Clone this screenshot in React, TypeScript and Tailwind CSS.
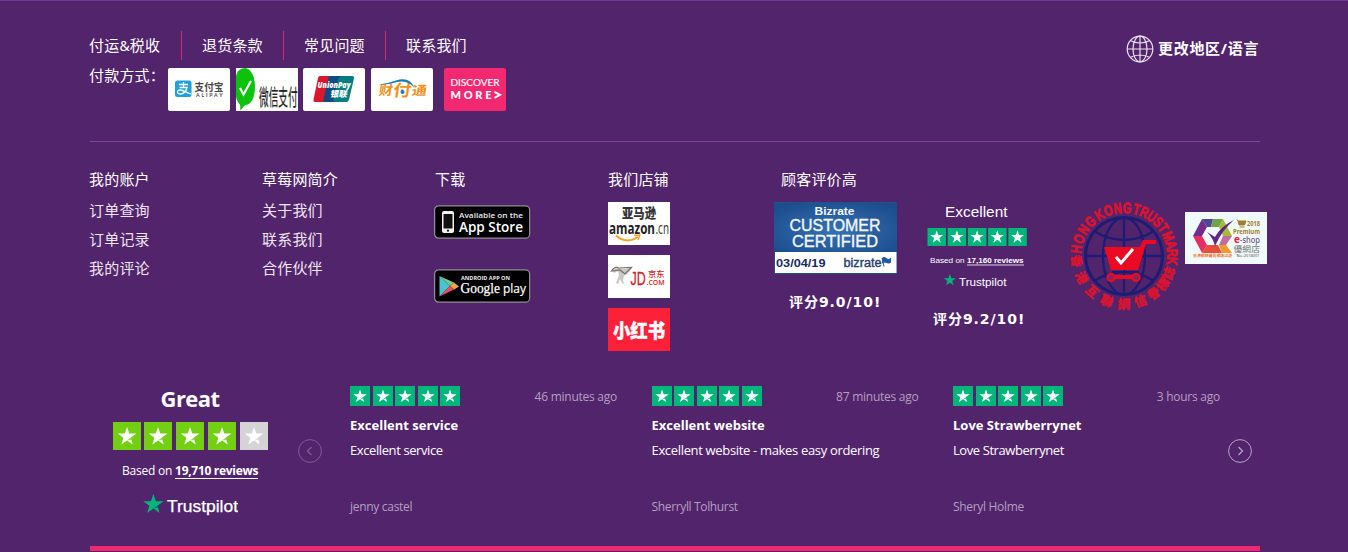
import React from "react";

const STAR = "M12 1.5l2.6 7.6h8.1l-6.5 4.8 2.4 7.7L12 16.9l-6.6 4.7 2.4-7.7L1.3 9.1h8.1z";

function StarBox({ size, fill }: { size: number; fill: string }) {
  return (
    <svg width={size} height={size} viewBox="0 0 28 28" className="block shrink-0">
      <rect width="28" height="28" fill={fill} />
      <g transform="translate(3.6 3.7) scale(.87)">
        <path d={STAR} fill="#fff" />
        <path d="M12 16.9l4.2-3 .8 2.4z" fill={fill} opacity=".75" />
      </g>
    </svg>
  );
}

const cjk = "'Noto Sans CJK SC', sans-serif";

function Alipay() {
  return (
    <svg width="62" height="43" viewBox="0 0 62 43" className="rounded-[2px] bg-white font-normal tracking-normal">
      <rect x="7" y="12.500" width="16.500" height="16.500" rx="2.500" fill="#20a1dc" />
      <path d="M11 16.5h9M15.500 14v5.500M11.500 19.500h7.500c-1 4-4 6.500-7 6.500-3.500 0-3-4 0-4 3.500 0 6 2.500 11 4" fill="none" stroke="#fff" strokeWidth="1.300" />
      <text x="26.500" y="22.500" textLength="29" lengthAdjust="spacingAndGlyphs" fontSize="10" fontWeight="700" fontFamily={cjk} fill="#4b4748">支付宝</text>
      <text x="28" y="29" textLength="26.500" fontSize="5.200" fontWeight="700" fontFamily="Lato, sans-serif" fill="#4b4748">ALIPAY</text>
    </svg>
  );
}

function WeChat() {
  return (
    <svg width="62" height="43" viewBox="0 0 62 43" className="bg-white font-normal tracking-normal">
      <path d="M8.500 0C14 0 19 7 19 18.500S15 37 9 37c-1.500 1.500-3 4-5 5.500.4-2.500.3-4 0-6C-3 31-3 5 4 1.500 5.500.5 7 0 8.500 0z" fill="#0cc20c" />
      <path d="M4 20l3.500 6.500L15 13" fill="none" stroke="#fff" strokeWidth="2.200" />
      <g transform="translate(23 36.5) scale(.46 1.04)">
        <text x="0" y="0" fontSize="21" fontFamily={cjk} fill="#222" stroke="#222" strokeWidth=".2">微信支付</text>
      </g>
    </svg>
  );
}

function UnionPay() {
  return (
    <svg width="62" height="43" viewBox="0 0 62 43" className="rounded-[2px] bg-white font-normal tracking-normal">
      <path d="M17 8h16l-6 26H12.500q-2.500 0-2-2.500L15 10q.5-2 2-2z" fill="#d9182c" />
      <path d="M27 8h12l-6 26H20.500q-.5 0 .1-2.500L25 10.500Q25.500 8 27 8z" fill="#0e4b80" />
      <path d="M40 8h9q2.600 0 2 2.500L46 31.500Q45.500 34 43 34H32.500q-2.500 0-2-2.500L35.500 10.500Q36 8 40 8z" fill="#067d80" />
      <text x="14.500" y="20" textLength="33" lengthAdjust="spacingAndGlyphs" fontSize="8" fontWeight="800" fontStyle="italic" fontFamily="Open Sans, sans-serif" fill="#fff">UnionPay</text>
      <text x="27" y="29" textLength="17" lengthAdjust="spacingAndGlyphs" fontSize="8.500" fontWeight="900" fontFamily={cjk} fill="#fff" transform="skewX(-10) translate(5 0)">银联</text>
    </svg>
  );
}

function Tenpay() {
  return (
    <svg width="62" height="43" viewBox="0 0 62 43" className="rounded-[2px] bg-white font-normal tracking-normal">
      <g fill="#ee921c" fontWeight="700" fontFamily={cjk} transform="translate(4.500 0) skewX(-9)">
        <text x="7" y="27.500" textLength="14" lengthAdjust="spacingAndGlyphs" fontSize="13.500">财</text>
        <text x="21.500" y="28" textLength="18" lengthAdjust="spacingAndGlyphs" fontSize="16">付</text>
        <text x="40" y="27.500" textLength="15" lengthAdjust="spacingAndGlyphs" fontSize="12.500">通</text>
      </g>
      <path d="M8 16.500Q17 15.500 25 12.500 39 8 43.500 20 37 11.500 26 14 17 17 8 16.500z" fill="#167dbe" />
      <circle cx="31.500" cy="24" r="2" fill="#167dbe" />
    </svg>
  );
}

function Discover() {
  return (
    <svg width="62" height="43" viewBox="0 0 62 43" className="rounded-[2px] bg-[#f22871] font-normal tracking-normal">
      <text x="6.500" y="18" textLength="49" lengthAdjust="spacingAndGlyphs" fontSize="8.800" fontFamily="Lato, sans-serif" fill="#fff" stroke="#fff" strokeWidth=".15">DISCOVER</text>
      <text x="6.500" y="31" textLength="41" fontSize="11" fontWeight="900" fontFamily="Lato, sans-serif" fill="#fff">MORE</text>
      <path d="M50.500 23.800l5.500 3-5.500 3" fill="none" stroke="#fff" strokeWidth="1.900" />
    </svg>
  );
}

function Globe() {
  return (
    <svg width="28" height="28" viewBox="0 0 28 28" fill="none" stroke="#e9e2ee" strokeWidth="1.200">
      <circle cx="14" cy="14" r="12.800" />
      <ellipse cx="14" cy="14" rx="7" ry="12.800" />
      <path d="M14 1v26M1 14h26M4 5.500q10 5 20 0M4 22.500q10-5 20 0" />
    </svg>
  );
}

function AppStore() {
  return (
    <svg width="97" height="34" viewBox="0 0 97 34" className="font-normal tracking-normal">
      <rect x=".6" y=".8" width="95" height="32.400" rx="4" fill="#000" stroke="#929096" strokeWidth="1.200" />
      <rect x="8" y="6" width="12" height="22" rx="2" fill="#f2f2f2" />
      <rect x="9.500" y="9" width="9" height="14.500" fill="#111" />
      <circle cx="14" cy="25.700" r="1.100" fill="#111" />
      <text x="25" y="12.500" textLength="64" lengthAdjust="spacingAndGlyphs" fontSize="7.800" fontWeight="600" fontFamily="Open Sans, sans-serif" fill="#eee">Available on the</text>
      <text x="25" y="26.500" textLength="64" lengthAdjust="spacingAndGlyphs" fontSize="15" fontWeight="600" fontFamily="Open Sans, sans-serif" fill="#fff">App Store</text>
    </svg>
  );
}

function GooglePlay() {
  return (
    <svg width="97" height="34" viewBox="0 0 97 34" className="font-normal tracking-normal">
      <rect x=".6" y=".8" width="95" height="32.400" rx="4" fill="#000" stroke="#929096" strokeWidth="1.200" />
      <path d="M5.500 7v20.500L16 17z" fill="#49c3cf" />
      <path d="M5.500 7L16 17l4-3.500z" fill="#70ca8e" />
      <path d="M16 17l4-3.500 5 4-5 3z" fill="#f1a44b" />
      <path d="M5.500 27.500L16 17l4 3.500z" fill="#e64f62" />
      <text x="27" y="11" textLength="49" lengthAdjust="spacingAndGlyphs" fontSize="6" fontWeight="700" fontFamily="Open Sans, sans-serif" fill="#eee">ANDROID APP ON</text>
      <text x="26.500" y="24" textLength="39.500" lengthAdjust="spacingAndGlyphs" fontSize="15" fontFamily="Liberation Serif, serif" fill="#fff" stroke="#fff" strokeWidth=".25">Google</text>
      <text x="69" y="24" textLength="23" lengthAdjust="spacingAndGlyphs" fontSize="13.500" fontFamily="Open Sans, sans-serif" fill="#fff" stroke="#fff" strokeWidth=".2">play</text>
    </svg>
  );
}

function Amazon() {
  return (
    <svg width="62" height="43" viewBox="0 0 62 43" className="bg-white font-normal tracking-normal">
      <text x="14" y="16" textLength="34" lengthAdjust="spacingAndGlyphs" fontSize="13.500" fontWeight="900" fontFamily={cjk} fill="#333">亚马逊</text>
      <text x="1" y="31.500" textLength="46" lengthAdjust="spacingAndGlyphs" fontSize="16.500" fontWeight="700" fontFamily="Open Sans, sans-serif" fill="#222">amazon</text>
      <text x="47.500" y="31.500" textLength="13.500" lengthAdjust="spacingAndGlyphs" fontSize="16.500" fontFamily="Open Sans, sans-serif" fill="#333">.cn</text>
      <path d="M8 33.500q10 9 22 1.500" fill="none" stroke="#f6a02c" strokeWidth="2" />
      <path d="M26 33.500l6-.5-2 5" fill="none" stroke="#f6a02c" strokeWidth="1.300" />
    </svg>
  );
}

function JD() {
  return (
    <svg width="62" height="43" viewBox="0 0 62 43" className="bg-white font-normal tracking-normal">
      <path d="M4 15l6-2 5 1 9-1-3 4-5 4-1 4 1 4-2-1-2-4-2 5-2-1 3-8-1-4-4 2z" fill="#c9c6c5" />
      <path d="M3.500 16q3-5 7.500-3l12.500-.5-6.500 6.500-5-4z" fill="none" stroke="#77716f" strokeWidth="1.200" />
      <g transform="translate(22.500 30) scale(.92 1)">
        <text x="0" y="0" textLength="16.500" lengthAdjust="spacingAndGlyphs" fontSize="19" fontFamily="Liberation Sans, sans-serif" fill="#d02128" stroke="#d02128" strokeWidth=".3">JD</text>
      </g>
      <text x="40" y="22" textLength="16.500" lengthAdjust="spacingAndGlyphs" fontSize="8" fontWeight="500" fontFamily={cjk} fill="#d02128">京东</text>
      <text x="38.500" y="30" textLength="18" lengthAdjust="spacingAndGlyphs" fontSize="7.500" fontWeight="600" fontFamily="Open Sans, sans-serif" fill="#d02128">.COM</text>
    </svg>
  );
}

function RedBook() {
  return (
    <svg width="62" height="43" viewBox="0 0 62 43" className="bg-[#fc2039] font-normal tracking-normal">
      <text x="5" y="29.500" textLength="52" lengthAdjust="spacingAndGlyphs" fontSize="19.500" fontWeight="900" fontFamily={cjk} fill="#fff" stroke="#fff" strokeWidth=".4">小红书</text>
    </svg>
  );
}

function Bizrate() {
  return (
    <svg width="123" height="72" viewBox="0 0 123 72" className="font-normal tracking-normal">
      <defs>
        <radialGradient id="biz" cx=".5" cy=".55" r=".65">
          <stop offset="0" stopColor="#3573b4" />
          <stop offset="1" stopColor="#1c4c8c" />
        </radialGradient>
      </defs>
      <rect width="123" height="72" fill="#23508e" />
      <rect y="1" width="123" height="50" fill="url(#biz)" />
      <rect x="1" y="50" width="121.500" height="21" fill="#fff" />
      <g fontFamily="Liberation Sans, sans-serif" fill="#f4f6fa">
        <text x="40.500" y="13" textLength="40" lengthAdjust="spacingAndGlyphs" fontSize="10.500" fontWeight="700">Bizrate</text>
        <text x="15.500" y="28.500" textLength="91" lengthAdjust="spacingAndGlyphs" fontSize="16.500" stroke="#f4f6fa" strokeWidth=".35">CUSTOMER</text>
        <text x="18" y="44.500" textLength="86" lengthAdjust="spacingAndGlyphs" fontSize="16.500" stroke="#f4f6fa" strokeWidth=".35">CERTIFIED</text>
      </g>
      <text x="2" y="64.500" textLength="49.500" lengthAdjust="spacingAndGlyphs" fontSize="10.500" fontWeight="700" fontFamily="Liberation Sans, sans-serif" fill="#172b5d">03/04/19</text>
      <text x="69.500" y="65" textLength="38" lengthAdjust="spacingAndGlyphs" fontSize="12" fontFamily="Liberation Sans, sans-serif" fill="#26416e" stroke="#26416e" strokeWidth=".4">bizrate</text>
      <path d="M108 56l2 8.500" stroke="#2b5895" strokeWidth="1" />
      <path d="M108 56q2-2 4.500 0t4.500-.5v5q-2 1.500-4.500.5t-4.500.5z" fill="#225aa4" />
    </svg>
  );
}

function TrustpilotRating() {
  return (
    <svg width="101" height="94" viewBox="0 0 101 94" className="font-normal tracking-normal">
      <g fontFamily="Liberation Sans, sans-serif" fill="#fff">
        <text x="18" y="14.500" textLength="62.500" fontSize="15.500" lengthAdjust="spacingAndGlyphs">Excellent</text>
        <text x="3" y="61" textLength="34.500" lengthAdjust="spacingAndGlyphs" fontSize="7.500">Based on</text>
        <text x="40" y="61" textLength="56.500" lengthAdjust="spacingAndGlyphs" fontSize="7.500" fontWeight="700">17,160 reviews</text>
        <text x="32" y="84" textLength="47.500" lengthAdjust="spacingAndGlyphs" fontSize="11.500">Trustpilot</text>
      </g>
      <path d="M40 63h57" stroke="#fff" strokeWidth=".8" />
      {[0, 1, 2, 3, 4].map((i) => (
        <g key={i} transform={`translate(${0.5 + i * 20.2} 26)`}>
          <rect width="18.500" height="18" fill="#00b67a" />
          <path d={STAR} fill="#fff" transform="translate(1.900 1.500) scale(.61)" />
        </g>
      ))}
      <path d={STAR} fill="#00b67a" transform="translate(16 71) scale(.57)" />
    </svg>
  );
}

const markLetters: [string, number][] = [
  ["H", -81], ["O", -68], ["N", -55], ["G", -42],
  ["K", -28], ["O", -16], ["N", -4], ["G", 8],
  ["T", 20], ["R", 30], ["U", 41], ["S", 51], ["T", 61],
  ["M", 73], ["A", 84], ["R", 94], ["K", 104],
];
const markBottom: [string, number][] = [
  ["香", 264], ["港", 243], ["互", 222], ["聯", 201], ["網", 180], ["信", 160], ["譽", 142], ["標", 126], ["誌", 111],
];

function TrustMark() {
  return (
    <svg width="110" height="112" viewBox="0 0 110 112" className="font-normal tracking-normal">
      <g fill="none" stroke="#1d1c75" strokeWidth="2.300">
        <circle cx="55" cy="55" r="38.500" strokeWidth="3" />
        <ellipse cx="55" cy="55" rx="21" ry="38.500" />
        <path d="M55 16v78M16 55h78M25 30q30 18 60 0M25 80q30-18 60 0" />
      </g>
      <g fill="#d9152f" fontFamily="Liberation Sans, sans-serif" fontWeight="700" fontSize="15" textAnchor="middle">
        {markLetters.map(([c, a], i) => (
          <text key={i} transform={`translate(55 55) rotate(${a * 0.96 - 4}) translate(0 -43) scale(.74 1)`} stroke="#d9152f" strokeWidth=".9">{c}</text>
        ))}
      </g>
      <g fill="#d9152f" fontFamily={cjk} fontWeight="900" fontSize="12.500" textAnchor="middle" stroke="#d9152f" strokeWidth=".3">
        {markBottom.map(([c, a]) => (
          <text key={a} transform={`translate(55 55) rotate(${a}) translate(0 -48) rotate(180) translate(0 4.500)`}>{c}</text>
        ))}
      </g>
      <path d="M35 46h36l3-7h13v4H77l-8 26H42z" fill="#ec0a22" />
      <path d="M42 69l-1 5h30v4H42" fill="#ec0a22" />
      <path d="M43 71h27" stroke="#1d1c75" strokeWidth="2" />
      <circle cx="42" cy="76.500" r="3.500" fill="#61336f" stroke="#ec0a22" strokeWidth="2.500" />
      <circle cx="67" cy="76.500" r="3.500" fill="#61336f" stroke="#ec0a22" strokeWidth="2.500" />
      <path d="M47 56l5 6 12-14" fill="none" stroke="#fff" strokeWidth="3" />
    </svg>
  );
}

function PremiumShop() {
  return (
    <svg width="82" height="52" viewBox="0 0 82 52" className="bg-[#f1fafb] font-normal tracking-normal">
      <path d="M17 7l5 8-5 9H8z" fill="#722d8c" />
      <path d="M8 24h9l5 9-5 8z" fill="#e42f64" />
      <path d="M17 41l5-8h11l4 8z" fill="#e5503a" />
      <path d="M17 7h11l-2 8h-4z" fill="#4e4894" />
      <path d="M28 7h10l-4 8h-8z" fill="#6fa446" />
      <path d="M38 7l9 17h-9l-4-9z" fill="#a8ba34" />
      <path d="M38 24h9l-6 9h-7z" fill="#c46aa0" />
      <path d="M34 33h7l6 8H37z" fill="#f19a2c" />
      <path d="M22 20l8 5q6-11 19-17Q37 18 30 34 28 26 22 20z" fill="#612589" />
      <text x="8" y="45" textLength="39" lengthAdjust="spacingAndGlyphs" fontSize="3.500" fontWeight="700" fontFamily={cjk} fill="#ed712c">香港網絡優質網店認證</text>
      <path d="M53 9h8l-1.500 4H54zM53 9l-1-1.500M54.500 15h5" fill="#a17c2b" stroke="#a17c2b" />
      <g fontFamily="Open Sans, sans-serif" fontWeight="700">
        <text x="62" y="14" textLength="13" lengthAdjust="spacingAndGlyphs" fontSize="7" fill="#a17c2b">2018</text>
        <text x="48" y="22" textLength="27" lengthAdjust="spacingAndGlyphs" fontSize="7" fill="#a17c2b">Premium</text>
        <text x="49" y="30.500" fontSize="10" fill="#dc2143">e</text>
        <text x="55" y="30.500" textLength="20" lengthAdjust="spacingAndGlyphs" fontSize="8.500" fill="#72608c" fontWeight="600">-shop</text>
      </g>
      <text x="48.500" y="40" textLength="26.500" lengthAdjust="spacingAndGlyphs" fontSize="8.500" fontFamily={cjk} fill="#777">優網店</text>
      <text x="51.500" y="45" textLength="23" lengthAdjust="spacingAndGlyphs" fontSize="3.500" fontFamily="Open Sans, sans-serif" fill="#444">No.:2018001</text>
    </svg>
  );
}

function LinkColumn({ title, links }: { title: string; links: string[] }) {
  return (
    <section className="w-[173px] shrink-0">
      <h3 className="h-[17px] leading-[17px]">{title}</h3>
      <ul className="mt-[8px] text-[#eee5f2]">
        {links.map((l) => (
          <li key={l} className="h-[29px] leading-[29px]">{l}</li>
        ))}
      </ul>
    </section>
  );
}

type Review = { title: string; body: string; bodyTrack: string; by: string; byTrack: string; when: string };
const reviews: Review[] = [
  { title: "Excellent service", body: "Excellent service", bodyTrack: "tracking-[-0.4px]", by: "jenny castel", byTrack: "tracking-[-0.3px]", when: "46 minutes ago" },
  { title: "Excellent website", body: "Excellent website - makes easy ordering", bodyTrack: "tracking-[-0.33px]", by: "Sherryll Tolhurst", byTrack: "tracking-[-0.35px]", when: "87 minutes ago" },
  { title: "Love Strawberrynet", body: "Love Strawberrynet", bodyTrack: "tracking-[-0.42px]", by: "Sheryl Holme", byTrack: "tracking-[-0.32px]", when: "3 hours ago" },
];

function Arrow({ next }: { next?: boolean }) {
  return (
    <svg width="24" height="24" viewBox="0 0 24 24" fill="none" stroke={next ? "#b8a3c4" : "#7f5d93"} strokeWidth="1" className="block shrink-0">
      <circle cx="12" cy="12" r="11.400" />
      <path d={next ? "M10.500 8l4 4-4 4" : "M13.500 8l-4 4 4 4"} strokeWidth="1.300" />
    </svg>
  );
}

function ReviewCard({ r }: { r: Review }) {
  return (
    <article className="w-[267px] shrink-0 font-['Open_Sans',sans-serif] text-[13px]">
      <div className="flex h-5 items-center justify-between">
        <div className="flex gap-[2.5px]">
          {[0, 1, 2, 3, 4].map((i) => <StarBox key={i} size={20} fill="#00b67a" />)}
        </div>
        <span className="mt-[2px] text-[12px] font-medium leading-5 tracking-[-0.25px] text-[#b39fc0]">{r.when}</span>
      </div>
      <h4 className="mt-[10px] h-[18px] whitespace-nowrap font-bold leading-[18px]">{r.title}</h4>
      <p className={`mt-[7px] h-[18px] whitespace-nowrap font-medium leading-[18px] text-white ${r.bodyTrack}`}>{r.body}</p>
      <p className={`mt-[39px] h-[18px] text-[12px] font-medium leading-[18px] text-[#b39fc0] ${r.byTrack}`}>{r.by}</p>
    </article>
  );
}

export default function App() {
  return (
    <footer className="h-[552px] w-[1348px] overflow-hidden border-t border-[#74378a] bg-[#52246b] font-['Noto_Sans','Noto_Sans_CJK_SC',sans-serif] text-[15px] tracking-[0.2px] text-white">
      <div className="ml-[89px] w-[1171px]">
        <div className="flex h-[140px] justify-between pt-[30px]">
          <div>
            <nav className="flex h-[29px] items-center whitespace-nowrap leading-[29px]">
              <a className="w-[93px] border-r border-[#d52b74]">付运<span className="text-[14px]">&amp;</span>税收</a>
              <a className="w-[102px] border-r border-[#d52b74] pl-[20px]">退货条款</a>
              <a className="w-[102px] border-r border-[#d52b74] pl-[20px]">常见问题</a>
              <a className="w-[102px] pl-[20px]">联系我们</a>
            </nav>
            <div className="mt-[8px] flex">
              <span className="-mt-px h-[17px] w-[79px] whitespace-nowrap leading-[17px]">付款方式：</span>
              <Alipay />
              <div className="ml-[6px]"><WeChat /></div>
              <div className="ml-[5px]"><UnionPay /></div>
              <div className="ml-[6px]"><Tenpay /></div>
              <div className="ml-[11px]"><Discover /></div>
            </div>
          </div>
          <div className="mt-[4px] flex h-7 items-center gap-[3px] font-bold">
            <Globe />
            <span className="-mt-[2px] w-[103px] whitespace-nowrap pl-px leading-7 tracking-[0.7px]">更改地区/语言</span>
          </div>
        </div>
        <hr className="ml-px border-0 border-t border-[#7e4392]" />

        <div className="flex h-[244px] w-[1179px] pt-[29px]">
          <LinkColumn title="我的账户" links={["订单查询", "订单记录", "我的评论"]} />
          <LinkColumn title="草莓网简介" links={["关于我们", "联系我们", "合作伙伴"]} />
          <section className="w-[173px] shrink-0">
            <h3 className="h-[17px] leading-[17px]">下载</h3>
            <div className="-ml-px mt-[17px] flex flex-col gap-[30px]">
              <AppStore />
              <GooglePlay />
            </div>
          </section>
          <section className="w-[166px] shrink-0">
            <h3 className="h-[17px] leading-[17px]">我们店铺</h3>
            <div className="mt-[14px] flex flex-col gap-[10px]">
              <Amazon />
              <JD />
              <RedBook />
            </div>
          </section>
          <section className="shrink-0">
            <h3 className="ml-[7px] h-[17px] leading-[17px]">顾客评价高</h3>
            <div className="mt-[14px] flex items-start font-['DejaVu_Sans','Noto_Sans_CJK_SC',sans-serif] text-[14px] font-bold">
              <div className="flex w-[153px] flex-col">
                <Bizrate />
                <p className="ml-[15px] mt-[18px] h-5 whitespace-nowrap leading-5 tracking-[0.95px]">评分9.0/10!</p>
              </div>
              <div className="w-[142px]">
                <TrustpilotRating />
                <p className="ml-[6px] mt-[13px] h-5 whitespace-nowrap leading-5 tracking-[0.95px]">评分9.2/10!</p>
              </div>
              <div className="-mt-px w-[116px]"><TrustMark /></div>
              <div className="mt-[10px]"><PremiumShop /></div>
            </div>
          </section>
        </div>

        <div className="ml-px flex h-[160px] font-['Open_Sans',sans-serif] tracking-normal">
          <div className="flex w-[200px] shrink-0 flex-col items-center">
            <h2 className="-mt-[2px] h-[28px] text-[22px] font-bold leading-[28px] tracking-[-0.6px]">Great</h2>
            <div className="mt-[10px] flex w-[155px] justify-between">
              {[0, 1, 2, 3, 4].map((i) => <StarBox key={i} size={28} fill={i < 4 ? "#73cf11" : "#d4d3d6"} />)}
            </div>
            <p className="mt-[12px] h-[17px] whitespace-nowrap text-[12px] leading-[17px] tracking-[-0.2px]">
              Based on <strong className="inline-block h-[17px] border-b border-white font-bold tracking-[-0.3px]">19,710 reviews</strong>
            </p>
            <svg width="96" height="26" viewBox="0 0 96 26" className="mt-[13px]">
              <path d={STAR} fill="#00b67a" transform="translate(0 .5) scale(.95)" />
              <path d="M11.500 16.500l4-3 .8 2.500z" fill="#007b56" />
              <text x="25" y="20" textLength="71" lengthAdjust="spacingAndGlyphs" fontSize="16.500" fontFamily="Liberation Sans, sans-serif" fill="#fff" stroke="#fff" strokeWidth=".25">Trustpilot</text>
            </svg>
          </div>
          <div className="ml-[8px] flex pt-[53px]"><Arrow /></div>
          <div className="ml-[28px] flex w-[870px] gap-[34.5px]">
            {reviews.map((r) => <ReviewCard key={r.title} r={r} />)}
          </div>
          <div className="ml-[8px] flex pt-[53px]"><Arrow next /></div>
        </div>
        <div className="ml-px h-[5px] bg-[#f0286f]" />
      </div>
    </footer>
  );
}
